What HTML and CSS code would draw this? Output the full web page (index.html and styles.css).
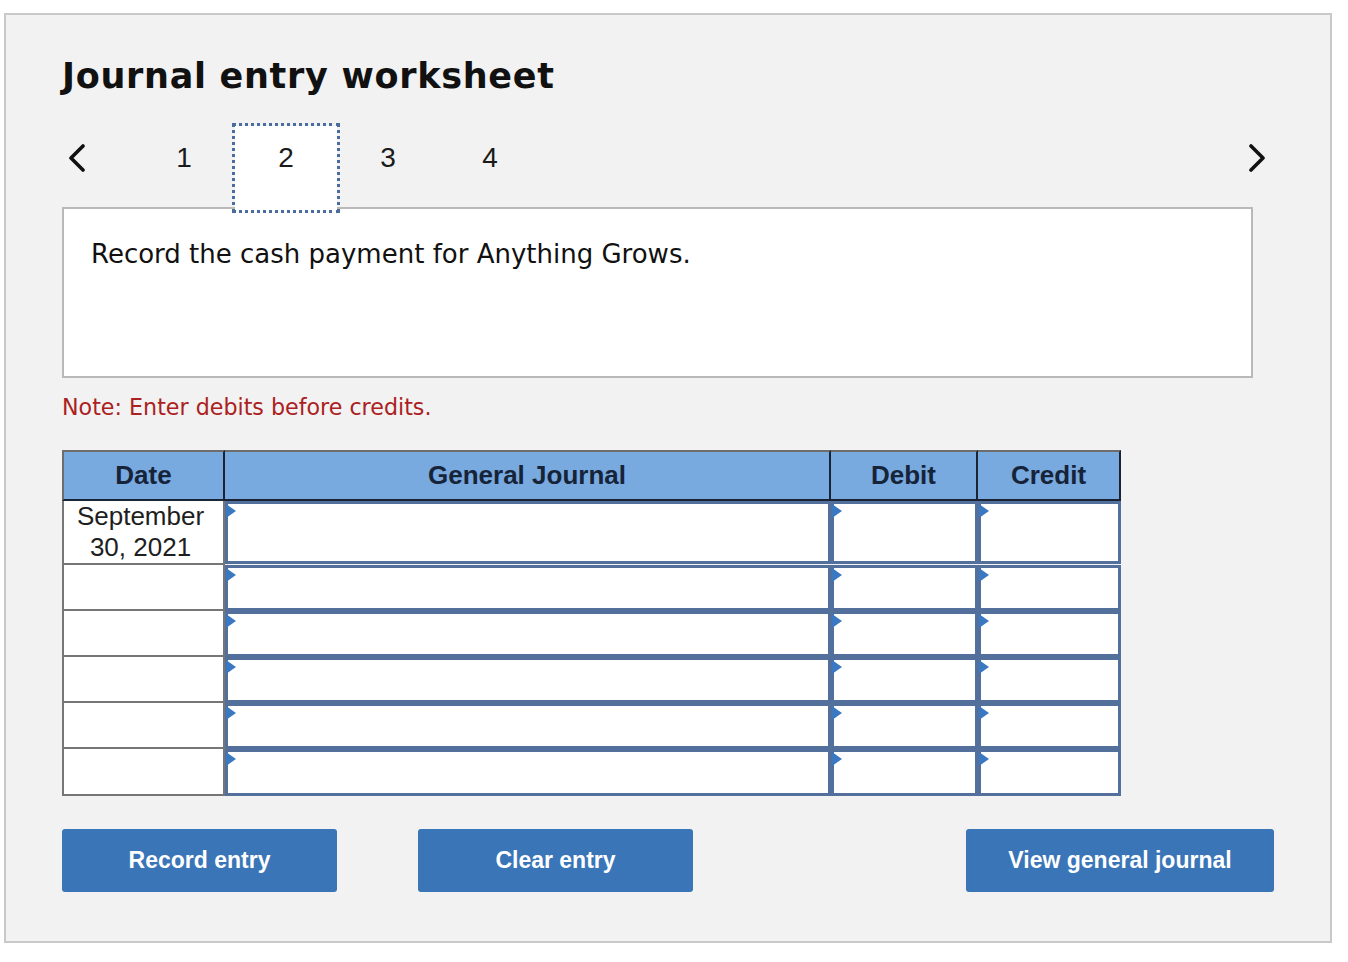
FILE: index.html
```html
<!DOCTYPE html>
<html lang="en">
<head>
<meta charset="utf-8">
<title>Journal entry worksheet</title>
<link rel="stylesheet" href="styles.css">
</head>
<body>
<div class="panel">
  <h1 class="title">Journal entry worksheet</h1>

  <div class="nav">
    <button class="arrow prev" aria-label="Previous">
      <svg width="20" height="28" viewBox="0 0 20 28"><polyline points="16,2 4,14 16,26" fill="none" stroke="#111" stroke-width="3.6" stroke-linecap="round" stroke-linejoin="round"/></svg>
    </button>
    <div class="tab">1</div>
    <div class="tab active">2</div>
    <div class="tab">3</div>
    <div class="tab">4</div>
    <button class="arrow next" aria-label="Next">
      <svg width="20" height="28" viewBox="0 0 20 28"><polyline points="4,2 16,14 4,26" fill="none" stroke="#111" stroke-width="3.6" stroke-linecap="round" stroke-linejoin="round"/></svg>
    </button>
  </div>

  <div class="prompt">Record the cash payment for Anything Grows.</div>

  <p class="note">Note: Enter debits before credits.</p>

  <table class="journal">
    <colgroup>
      <col class="c-date"><col class="c-gj"><col class="c-debit"><col class="c-credit">
    </colgroup>
    <thead>
      <tr><th>Date</th><th>General Journal</th><th>Debit</th><th>Credit</th></tr>
    </thead>
    <tbody>
      <tr class="first">
        <td class="date">September<br>30, 2021</td>
        <td class="inp"><div class="box"></div></td>
        <td class="inp"><div class="box"></div></td>
        <td class="inp"><div class="box"></div></td>
      </tr>
      <tr>
        <td class="date"></td>
        <td class="inp"><div class="box"></div></td>
        <td class="inp"><div class="box"></div></td>
        <td class="inp"><div class="box"></div></td>
      </tr>
      <tr>
        <td class="date"></td>
        <td class="inp"><div class="box"></div></td>
        <td class="inp"><div class="box"></div></td>
        <td class="inp"><div class="box"></div></td>
      </tr>
      <tr>
        <td class="date"></td>
        <td class="inp"><div class="box"></div></td>
        <td class="inp"><div class="box"></div></td>
        <td class="inp"><div class="box"></div></td>
      </tr>
      <tr>
        <td class="date"></td>
        <td class="inp"><div class="box"></div></td>
        <td class="inp"><div class="box"></div></td>
        <td class="inp"><div class="box"></div></td>
      </tr>
      <tr class="last">
        <td class="date"></td>
        <td class="inp"><div class="box"></div></td>
        <td class="inp"><div class="box"></div></td>
        <td class="inp"><div class="box"></div></td>
      </tr>
    </tbody>
  </table>

  <div class="actions">
    <button class="btn fixed">Record entry</button>
    <button class="btn fixed">Clear entry</button>
    <button class="btn wide">View general journal</button>
  </div>
</div>
</body>
</html>
```

FILE: styles.css
```css
html, body {
  margin: 0;
  padding: 0;
  background: #ffffff;
}

body {
  font-family: "Liberation Sans", Arial, sans-serif;
  color: #111;
}

.panel {
  margin: 13px 16px 0 4px;
  border: 2px solid #c9c9c9;
  background: #f2f2f2;
  padding: 41px 56px 48px 56px;
  box-sizing: border-box;
  height: 930px;
}

.title {
  margin: 0;
  font-family: "DejaVu Sans", sans-serif;
  font-weight: bold;
  font-size: 35px;
  letter-spacing: 0.7px;
  line-height: 40px;
  color: #111;
}

.nav {
  display: flex;
  align-items: flex-start;
  margin-top: 30px;
  margin-bottom: -3px;
  height: 84px;
  position: relative;
  z-index: 1;
}

.arrow {
  background: none;
  border: 0;
  padding: 0;
  margin: 0;
  height: 84px;
  display: flex;
  align-items: flex-start;
  cursor: pointer;
}

.arrow svg {
  display: block;
  margin-top: 18px;
}

.prev {
  width: 71px;
  padding-left: 5px;
  justify-content: flex-start;
  box-sizing: border-box;
}

.next {
  margin-left: auto;
  margin-right: 7px;
}

.tab {
  width: 102px;
  height: 84px;
  box-sizing: border-box;
  padding-top: 16px;
  text-align: center;
  font-size: 28px;
  line-height: 32px;
  color: #1a1a1a;
}

.tab.active {
  position: relative;
  background: #ffffff;
}

.tab.active::after {
  content: "";
  position: absolute;
  inset: -3px;
  border: 3px dotted #4a6c9f;
  pointer-events: none;
}

.prompt {
  width: 1191px;
  height: 171px;
  box-sizing: border-box;
  background: #ffffff;
  border: 2px solid #b9b9b9;
  padding: 30px 27px;
  font-family: "DejaVu Sans", sans-serif;
  font-size: 26px;
  line-height: 31px;
  color: #111;
}

.note {
  margin: 16px 0 0 0;
  font-family: "DejaVu Sans", sans-serif;
  font-size: 22.2px;
  line-height: 27px;
  color: #ab2121;
}

.journal {
  margin-top: 29px;
  width: 1059px;
  table-layout: fixed;
  border-collapse: separate;
  border-spacing: 0;
}

.c-date { width: 163px; }
.c-gj { width: 606px; }
.c-debit { width: 147px; }
.c-credit { width: 143px; }

.journal th {
  background: #78a9df;
  color: #16243a;
  font-size: 26px;
  font-weight: bold;
  height: 47px;
  padding: 0;
  border-top: 2px solid #6d6d6d;
  border-bottom: 2px solid #1b2434;
  border-right: 2px solid #1b2434;
  text-align: center;
  vertical-align: middle;
}

.journal th:first-child {
  border-left: 2px solid #6d6d6d;
}

.journal td {
  padding: 0;
  vertical-align: top;
}

.journal td.date {
  border-left: 2px solid #767676;
  border-right: 2px solid #767676;
  border-bottom: 2px solid #767676;
  background: #ffffff;
  text-align: center;
  font-size: 26px;
  line-height: 31px;
  color: #1e1e1e;
  padding-right: 6px;
}

.box {
  position: relative;
  height: 46px;
  box-sizing: border-box;
  border: 3px solid #52709b;
  background: #ffffff;
}

.first .box {
  height: 63px;
}

.last .box {
  height: 47px;
}

.box::before {
  content: "";
  position: absolute;
  left: -2px;
  top: 0;
  width: 0;
  height: 0;
  border-left: 10px solid #3a78c2;
  border-top: 7px solid transparent;
  border-bottom: 7px solid transparent;
}

.actions {
  display: flex;
  margin-top: 33px;
  gap: 81px;
}

.btn {
  height: 63px;
  background: #3a75b8;
  color: #ffffff;
  border: 0;
  border-radius: 3px;
  font-family: "Liberation Sans", Arial, sans-serif;
  font-weight: bold;
  font-size: 23px;
  padding: 0;
  cursor: pointer;
}

.btn.fixed {
  width: 275px;
}

.btn.wide {
  width: 308px;
  margin-left: auto;
}
```
